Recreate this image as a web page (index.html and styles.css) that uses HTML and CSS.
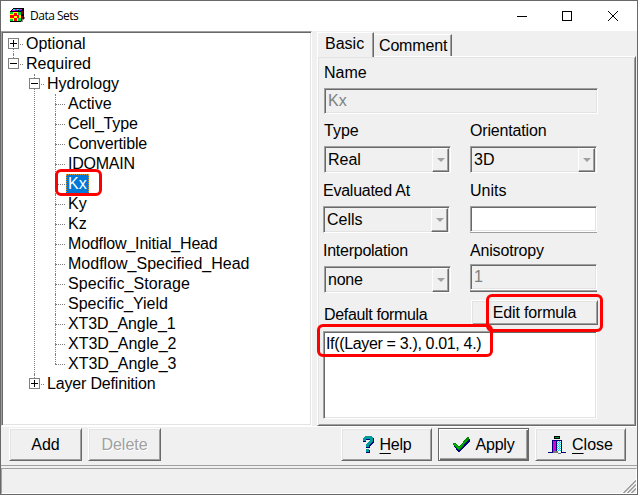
FILE: index.html
```html
<!DOCTYPE html>
<html lang="en">
<head>
<meta charset="utf-8">
<title>Data Sets</title>
<link rel="stylesheet" href="styles.css">
</head>
<body>
<div class="window">
  <header class="titlebar">
    <svg class="app-icon" width="16" height="15" viewBox="0 0 16 15" shape-rendering="crispEdges">
      <path fill="#000" d="M3 0h10l1 1v10l-4 3H0V4z"/>
      <path fill="#00e8e8" d="M3 1h2v1H3zM7 1h2v1H7z"/><path fill="#e020e0" d="M5 1h2v1H5zM9 1h3v1H9zM2 2h3v1H2z"/><path fill="#2020ff" d="M5 2h3v1H5zM9 2h2v1H9z"/>
      <path fill="#ffff00" d="M0 4h11v9H0z"/>
      <path fill="#f00" d="M4 5h3v3H4zM0 7h4v3H0zM7 7h2v3H7zM4 10h3v3H4z"/>
      <path fill="#00d030" d="M0 4h3v2H0zM8 4h3v3H8zM0 11h3v2H0zM8 10h3v3H8z"/>
      <path fill="#800000" d="M11 3h2v3h-2zM11 8h2v3h-2z"/>
      <path fill="#888" d="M14 9h1v2h-1v1h-1v2h-2v-1h1v-2h2z"/>
    </svg>
    <h1>Data Sets</h1>
    <svg class="caption" width="104" height="12" viewBox="0 0 104 12" fill="none" stroke="#000">
      <path d="M0 6.500h10M45.500 1.500h9v9h-9z" shape-rendering="crispEdges"/><path d="M91 1l10 10M101 1L91 11"/>
    </svg>
  </header>
  <main class="body">
    <nav class="tree">
      <ul>
        <li><div class="row"><i class="box plus"></i><span>Optional</span></div></li>
        <li><div class="row"><i class="box"></i><span>Required</span></div>
          <ul>
            <li><div class="row"><i class="box"></i><span>Hydrology</span></div>
              <ul class="leaves">
                <li><div class="row"><span>Active</span></div></li>
                <li><div class="row"><span class="snug">Cell_Type</span></div></li>
                <li><div class="row"><span class="snug">Convertible</span></div></li>
                <li><div class="row"><span class="tight">IDOMAIN</span></div></li>
                <li><div class="row"><span class="selected">Kx</span></div></li>
                <li><div class="row"><span>Ky</span></div></li>
                <li><div class="row"><span>Kz</span></div></li>
                <li><div class="row"><span class="snug">Modflow_Initial_Head</span></div></li>
                <li><div class="row"><span>Modflow_Specified_Head</span></div></li>
                <li><div class="row"><span class="loose">Specific_Storage</span></div></li>
                <li><div class="row"><span>Specific_Yield</span></div></li>
                <li><div class="row"><span class="trim">XT3D_Angle_1</span></div></li>
                <li><div class="row"><span>XT3D_Angle_2</span></div></li>
                <li><div class="row"><span>XT3D_Angle_3</span></div></li>
              </ul>
            </li>
            <li><div class="row"><i class="box plus"></i><span class="snug">Layer Definition</span></div></li>
          </ul>
        </li>
      </ul>
    </nav>
    <section class="pages">
      <div class="tabs"><div class="tab active">Basic</div><div class="tab snug">Comment</div></div>
      <div class="page">
        <label class="name-label">Name</label>
        <div class="edit name-edit">Kx</div>
        <div class="columns">
          <div class="column">
            <label>Type</label>
            <div class="combo"><span>Real</span><i class="drop"></i></div>
            <label class="shift tight">Evaluated At</label>
            <div class="combo shift"><span>Cells</span><i class="drop"></i></div>
            <label class="shift tight">Interpolation</label>
            <div class="combo"><span class="tight">none</span><i class="drop"></i></div>
          </div>
          <div class="column">
            <label class="snug">Orientation</label>
            <div class="combo"><span>3D</span><i class="drop"></i></div>
            <label>Units</label>
            <div class="edit units"></div>
            <label class="snug">Anisotropy</label>
            <div class="edit anisotropy">1</div>
          </div>
        </div>
        <div class="formula-head"><label class="tighter">Default formula</label><div class="button edit-formula snug">Edit formula</div></div>
        <div class="memo tighter">If((Layer = 3.), 0.01, 4.)</div>
      </div>
    </section>
  </main>
  <footer class="actions">
    <div class="button">Add</div>
    <div class="button disabled">Delete</div>
    <div class="button wide push">
      <svg width="12" height="17" viewBox="0 0 12 17" shape-rendering="crispEdges"><path fill="#000080" d="M3 1h7l2 2v4L8 10v2H4V9l4-3V4H4v2H1V3zM4 14h4v3H4z"/><path fill="#009c9c" d="M3 0h6l2 2v4L7 9v2H4V8l4-3V3H4v2H1V2zM4 13h3v3H4z"/></svg>
      <span class="tight"><u>H</u>elp</span></div>
    <div class="button wide default">
      <svg width="17" height="15" viewBox="0 0 17 15" shape-rendering="crispEdges"><path fill="#000080" d="M1 7h3l3 4 7-9h3v2L7 15H5L1 9z"/><path fill="#008a00" d="M0 6h3l3 4 8-10h2v2L7 13H5L0 8z"/><path fill="#00b800" d="M1 7h2l3 4 8-9v1l-8 9H5z"/></svg>
      <span class="tight">Apply</span></div>
    <div class="button wide">
      <svg width="18" height="18" viewBox="0 0 18 18" shape-rendering="crispEdges"><path fill="#000" d="M6 0h6v3H6z"/><path fill="#00a030" d="M7 1h4v1H7z"/><path fill="#000080" d="M4 4h10v12h4v1h-5V5H5v12H0v-1h4z"/><path fill="#e000d0" d="M5 5h4v11H5z"/><path fill="#000080" d="M8 5h1v11H8z"/><path fill="#e8ffff" d="M9 5h4v11H9z"/><path stroke="#00dce8" stroke-dasharray="1 1" d="M9.500 5v9M11.500 5v9"/><path stroke="#00dce8" stroke-dasharray="1 1" d="M10.500 6v9M12.500 6v9"/><path fill="#777" d="M6 15h4v2H5zM10 17h3v1h-3z"/></svg>
      <span><u>C</u>lose</span></div>
  </footer>
  <div class="statusbar">
    <svg width="14" height="14" viewBox="0 0 14 14"><path stroke="#fff" d="M0 14L14 0M4 14L14 4M8 14l6-6"/><path stroke="#999" stroke-width="1.500" d="M1.500 14L14 1.500M5.500 14L14 5.500M9.500 14L14 9.500"/></svg>
  </div>
  <i class="mark mark-node"></i>
  <i class="mark mark-button"></i>
  <i class="mark mark-formula"></i>
</div>
</body>
</html>
```
FILE: styles.css
```css
* { box-sizing: border-box; }
body { margin: 0; font: 16px/20px "Liberation Sans", Arial, sans-serif; color: #000; }
ul { list-style: none; margin: 0; padding: 0; }
.window {
  position: relative; display: flex; flex-direction: column;
  width: 638px; height: 495px; background: #f0f0f0;
  border: 1px solid #696969; overflow: hidden;
}
.titlebar { display: flex; align-items: center; height: 30px; background: #fff; padding-left: 9px; flex: none; }
.app-icon { margin-top: -2px; }
.titlebar h1 { margin: 0 0 0 4px; font: 12px/20px "Open Sans", "Noto Sans", sans-serif; letter-spacing: -.5px; }
.caption { margin: -1px 16px 0 auto; }
.body { display: flex; height: 395px; flex: none; }

.loose { letter-spacing: .06px; }
.trim { letter-spacing: -.08px; }
.snug { letter-spacing: -.17px; }
.tight { letter-spacing: -.25px; }
.tighter { letter-spacing: -.34px; }

.tree {
  width: 311px; background: #fff;
  border: 1px solid; border-color: #a0a0a0 #fff #fff #a0a0a0;
  box-shadow: inset 1px 1px #696969, inset -1px -1px #e3e3e3;
  padding: 2px 0 0 6px;
}
.tree ul ul { margin-left: 21px; }
.tree li { position: relative; }
.tree li::before { content: ""; position: absolute; left: 5px; top: 0; bottom: 0; border-left: 1px dotted #808080; }
.tree > ul > li::before { height: 10px; }
.tree > ul > li:first-child::before { top: 10px; }
.tree li:last-child::before { bottom: auto; height: 10px; }
.row { position: relative; display: flex; align-items: center; height: 20px; }
.row::before { content: ""; position: absolute; left: 5px; width: 10px; top: 10px; border-top: 1px dotted #808080; }
.row span { margin-left: 7px; line-height: 20px; white-space: nowrap; }
.leaves .row span { margin-left: 18px; }
.leaves .row .selected { margin-left: 16px; padding: 0 2px; background: #0078d7; color: #fff; outline: 1px dotted #e0902c; outline-offset: -1px; }
.box {
  position: relative; width: 11px; height: 11px; margin-top: -1px; border: 1px solid #808080;
  background: linear-gradient(#000, #000) center / 7px 1px no-repeat #fff;
}
.plus { background: linear-gradient(#000, #000) center / 7px 1px no-repeat, linear-gradient(#000, #000) center / 1px 7px no-repeat #fff; }

.pages { display: flex; flex-direction: column; width: 319px; margin-left: 5px; }
.tabs { display: flex; align-items: flex-end; height: 25px; flex: none; }
.tab {
  height: 22px; width: 78px; padding-left: 5px; line-height: 22px;
  border-top: 1px solid #fff; border-right: 1px solid #696969; box-shadow: inset -1px 0 #a0a0a0;
}
.tab.active { width: 57px; height: 25px; margin-bottom: -1px; padding-left: 7px; border-left: 1px solid #fff; background: #f0f0f0; z-index: 1; }
.page {
  flex: 1; padding: 6px 0 0 6px;
  border: 1px solid; border-color: #fff #696969 #696969 #fff;
  box-shadow: inset 1px 1px #e3e3e3, inset -1px -1px #a0a0a0;
}
.page label { display: block; height: 20px; }
.edit, .combo, .memo {
  border: 1px solid; border-color: #a0a0a0 #fff #fff #a0a0a0;
  box-shadow: inset 1px 1px #696969, inset -1px -1px #e3e3e3;
}
.name-edit { width: 274px; height: 26px; margin-top: 5px; padding: 2px 3px; color: #808080; }
.columns { display: grid; grid-template-columns: 128px 127px; column-gap: 18px; margin-top: 7px; }
.columns label { height: 25px; }
.combo { display: flex; justify-content: space-between; width: 127px; height: 27px; margin-bottom: 8px; padding: 2px 1px 0 3px; }
.combo span { padding-top: 1px; }
.shift { margin-left: -1px; }
.drop {
  display: flex; align-items: center; justify-content: center; width: 17px; height: 24px; margin-top: -1px;
  border: 1px solid; border-color: #fff #696969 #696969 #fff; box-shadow: inset -1px -1px #a0a0a0;
}
.drop::after { content: ""; border: 4px solid transparent; border-top-color: #a0a0a0; border-bottom: 0; }
.units { height: 26px; margin-bottom: 9px; background: #fff; box-shadow: inset 1px 1px #696969, inset -1px -1px #e3e3e3, 0 1px #a0a0a0; }
.anisotropy { height: 26px; margin-top: -2px; padding: 2px 3px; color: #808080; box-shadow: inset 1px 1px #696969, inset -1px -1px #e3e3e3, 0 1px #a0a0a0, 0 2px #696969; }
.formula-head { display: flex; align-items: center; justify-content: space-between; width: 274px; height: 25px; margin-top: -1px; }
.formula-head label { padding-top: 2px; }
.memo { width: 274px; height: 88px; margin: 6px 0 0 -1px; padding: 2px; background: #fff; }

.button {
  display: flex; align-items: center; justify-content: center; width: 73px; height: 33px;
  border: 1px solid; border-color: #fff #696969 #696969 #fff;
  box-shadow: inset 1px 1px #e3e3e3, inset -1px -1px #a0a0a0;
}
.edit-formula { width: 127px; height: 25px; }
.actions { display: flex; gap: 6px; height: 40px; flex: none; padding: 1px 11px 0 8px; border-bottom: 1px solid #a0a0a0; border-top: 1px solid #fff; }
.disabled { color: #a0a0a0; text-shadow: 1px 1px #fff; }
.wide { width: 91px; gap: 6px; }
.push { margin-left: auto; }
.default { border-color: #696969; box-shadow: inset 1px 1px #fff, inset -1px -1px #696969, inset -2px -2px #a0a0a0; }
.button u { text-underline-offset: 3px; text-decoration-thickness: 1px; }
.statusbar { display: flex; justify-content: flex-end; align-items: flex-end; flex: 1; margin-top: 2px; border: 1px solid; border-color: #a0a0a0 #fff #fff #a0a0a0; }

.mark { position: absolute; border: 3px solid #f00; border-radius: 6px; }
.mark-node { left: 54px; top: 168px; width: 47px; height: 27px; }
.mark-button { left: 485px; top: 293px; width: 117px; height: 38px; }
.mark-formula { left: 316px; top: 323px; width: 176px; height: 33px; }
```
